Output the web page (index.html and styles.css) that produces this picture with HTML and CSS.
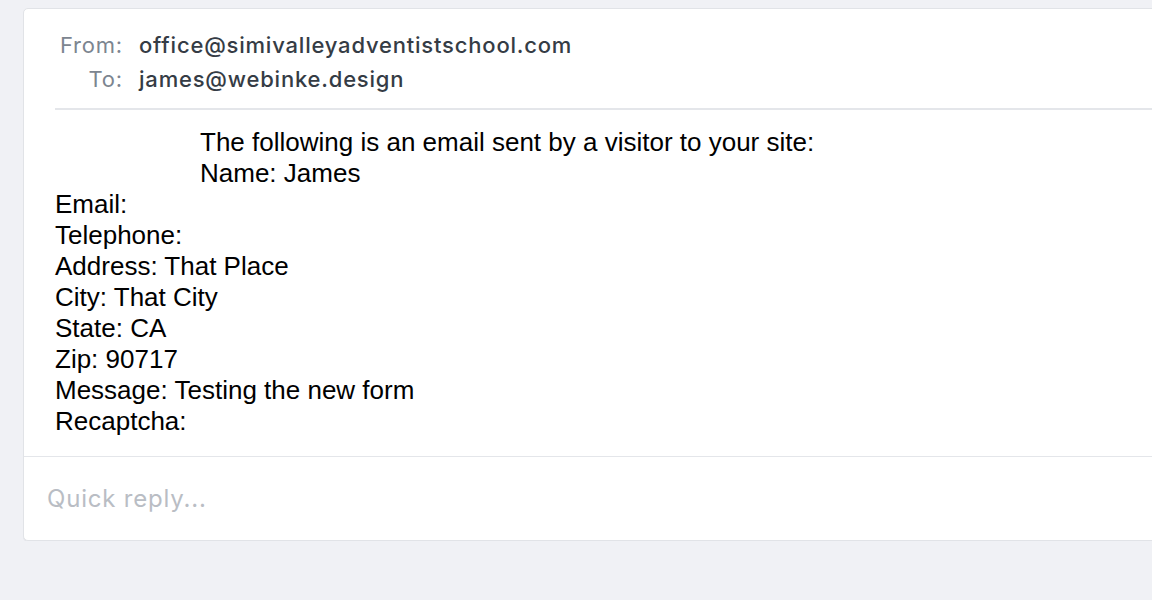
FILE: index.html
```html
<!doctype html>
<html lang="en">
    <head>
        <meta charset="UTF-8" />
        <meta name="viewport" content="width=device-width, initial-scale=1.0" />
        <title>Message</title>
        <link rel="stylesheet" href="styles.css">
    </head>
    <body>
        <div class="card">
            <div class="message">
                <div class="headers">
                    <div class="hrow">
                        <span class="hlabel">From:</span>
                        <span class="hvalue">office@simivalleyadventistschool.com</span>
                    </div>
                    <div class="hrow">
                        <span class="hlabel">To:</span>
                        <span class="hvalue">james@webinke.design</span>
                    </div>
                </div>

                <div class="content">
                    <div class="intro">
                        The following is an email sent by a visitor to your site:<br>
                        Name: James
                    </div>
                    Email:<br>
                    Telephone:<br>
                    Address: That Place<br>
                    City: That City<br>
                    State: CA<br>
                    Zip: 90717<br>
                    Message: Testing the new form<br>
                    Recaptcha:
                </div>
            </div>

            <div class="reply">
                <input type="text" class="reply-input" placeholder="Quick reply..." />
            </div>
        </div>
    </body>
</html>
```

FILE: styles.css
```css
body {
    margin: 0;
    padding: 8px 0 0 23px;
    background-color: #f0f1f5;
    font-family: Inter, "Liberation Sans", sans-serif;
    overflow: hidden;
}
.card {
    width: 1200px;
    background-color: #fff;
    border: 1px solid #e1e3e7;
    border-radius: 5px;
    box-shadow: 0 1px 0 #e4e6ea;
}
.message {
    padding: 19px 0 0 31px;
}
.headers {
    padding-bottom: 12px;
    border-bottom: 2px solid #e4e6ea;
}
.hrow {
    display: flex;
    gap: 16px;
    font-size: 22px;
    line-height: 34px;
    letter-spacing: 0.8px;
}
.hlabel {
    width: 68px;
    flex-shrink: 0;
    text-align: right;
    color: #7c8590;
}
.hvalue {
    color: #353c45;
    font-weight: 500;
}
.content {
    padding: 17px 0 19px 0;
    font-family: "Liberation Sans", Arial, sans-serif;
    font-size: 26px;
    line-height: 31px;
    color: #000;
}
.intro {
    padding-left: 145px;
}
.reply {
    border-top: 1px solid #e4e6ea;
    padding: 23px 0 23px 23px;
}
.reply-input {
    border: none;
    outline: none;
    padding: 0;
    width: 600px;
    font-family: Inter, "Liberation Sans", sans-serif;
    font-size: 24px;
    letter-spacing: 0.8px;
    line-height: 37px;
    color: #333;
}
.reply-input::placeholder {
    color: #b9bdc4;
}
```
